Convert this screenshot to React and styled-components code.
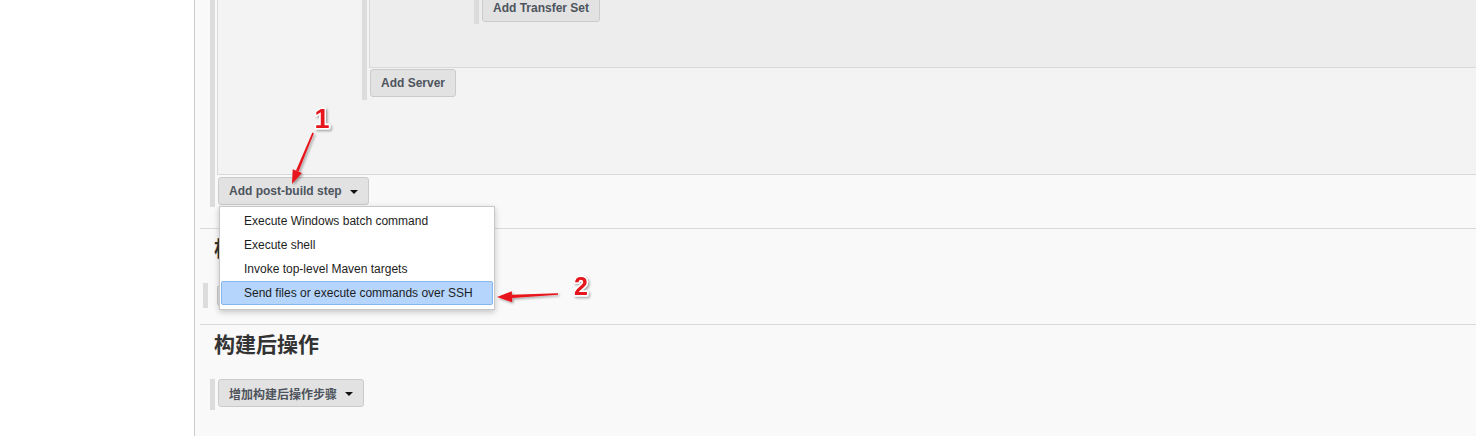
import React from 'react';
import styled, { createGlobalStyle } from 'styled-components';

const GlobalStyle = createGlobalStyle`
  html, body { margin: 0; padding: 0; background: #fff; }
  body {
    font-family: "Liberation Sans", Arial, "Noto Sans CJK SC", sans-serif;
    font-size: 12px;
  }
`;

const Page = styled.div`
  position: relative;
  display: flex;
  height: 436px;
  overflow: hidden;
`;

const Sidebar = styled.aside`
  flex: none;
  width: 194px;
  background: #fff;
`;

const Main = styled.main`
  flex: 1;
  background: #f9f9f9;
  border-left: 1px solid #cccccc;
  padding-left: 5px;
  overflow: hidden;
`;

const Section = styled.section`
  border-top: ${p => (p.$first ? 'none' : '1px solid #dadada')};
  margin-top: ${p => p.$offset || 0}px;
  padding: 0 0 ${p => p.$bottom || 0}px 10px;
`;

const Heading = styled.h2`
  margin: 0;
  padding: 7px 0 0 4px;
  font-family: "Liberation Sans", "Noto Sans CJK SC", sans-serif;
  font-size: 21px;
  line-height: 25px;
  height: 25px;
  font-weight: bold;
  color: #333;
`;

// a repeated chunk with the gray grip bar down its left edge
const Chunk = styled.div`
  border-left: 5px solid #dcdcdc;
  padding-left: ${p => p.$gap ?? 2}px;
  padding-bottom: ${p => p.$bottom || 0}px;
  margin-top: ${p => p.$top || 0}px;
  margin-left: ${p => p.$shift || 0}px;
`;

const Panel = styled.div`
  background: ${p => p.$bg};
  border-left: 1px solid #d9d9d9;
  border-bottom: 1px solid #d9d9d9;
  padding: ${p => p.$pad};
`;

const ButtonWrap = styled.div`
  position: relative;
  display: inline-block;
  vertical-align: top;
  margin-top: ${p => p.$top || 0}px;
  margin-left: ${p => p.$left || 0}px;
`;

const Button = styled.button`
  box-sizing: border-box;
  display: inline-flex;
  align-items: center;
  gap: 8px;
  height: ${p => p.$h || 28}px;
  padding: 0 10px;
  background: #e2e2e2;
  border: 1px solid #cbcbcb;
  border-radius: 3px;
  color: #4d545d;
  font-family: "Liberation Sans", Arial, "Noto Sans CJK SC", sans-serif;
  font-size: 12px;
  font-weight: bold;
  white-space: nowrap;
  cursor: pointer;
`;

const Caret = styled.span`
  width: 0;
  height: 0;
  border-left: 4px solid transparent;
  border-right: 4px solid transparent;
  border-top: 4px solid #111;
  margin-top: 1px;
`;

const Menu = styled.ul`
  position: absolute;
  top: 29px;
  left: 1px;
  z-index: 5;
  box-sizing: border-box;
  width: 276px;
  margin: 0;
  padding: 2px 1px 4px;
  list-style: none;
  background: #fff;
  border: 1px solid #c8c8c8;
  box-shadow: 0 2px 6px rgba(0, 0, 0, 0.22);
`;

const MenuItem = styled.li`
  height: 24px;
  line-height: 22px;
  padding-left: 22px;
  border: 1px solid ${p => (p.$active ? '#86b5f0' : 'transparent')};
  border-radius: 2px;
  background: ${p => (p.$active ? '#b5d5fd' : 'transparent')};
  color: #1d1d1d;
  font-size: 12px;
  white-space: nowrap;
  box-sizing: border-box;
`;

const Overlay = styled.svg`
  position: absolute;
  left: 0;
  top: 0;
  pointer-events: none;
  z-index: 10;
  overflow: visible;
`;

const Label = styled.text`
  font-family: "Liberation Sans", Arial, sans-serif;
  font-weight: bold;
  fill: #e5131a;
  stroke: #fff;
  stroke-width: 3px;
  paint-order: stroke;
  stroke-linejoin: round;
`;

const menuItems = [
  'Execute Windows batch command',
  'Execute shell',
  'Invoke top-level Maven targets',
  'Send files or execute commands over SSH',
];

function Annotations() {
  return (
    <Overlay width="1476" height="436" viewBox="0 0 1476 436">
      <defs>
        <filter id="sh" x="-20%" y="-20%" width="140%" height="140%">
          <feDropShadow dx="1.5" dy="1.5" stdDeviation="1.2" floodColor="#000" floodOpacity="0.35" />
        </filter>
      </defs>
      <g filter="url(#sh)" fill="#e8141b">
        <polygon points="312.4,132.6 313.9,133.2 298.6,171.6 296.0,170.6" />
        <polygon points="292,184 301.9,173 292.7,169.2" />
        <polygon points="558,293.3 558,294.7 512,297.9 512,294.7" />
        <polygon points="497,297 512.2,302.3 511.8,291.3" />
      </g>
      <g filter="url(#sh)">
        <Label x="322" y="128" fontSize="27" textAnchor="middle">1</Label>
        <Label x="581" y="295" fontSize="25" textAnchor="middle">2</Label>
      </g>
    </Overlay>
  );
}

export default function App() {
  return (
    <>
      <GlobalStyle />
      <Page>
        <Sidebar />
        <Main>
          <Section $first $offset={-40} $bottom={21}>
            <Chunk $bottom={2}>
              <Panel $bg="#f3f3f3" $pad="0 0 74px 144px">
                <Chunk $bottom={3}>
                  <Panel $bg="#ededed" $pad="34px 0 43px 104px">
                    <Chunk $gap={3} $bottom={2}>
                      <Button>Add Transfer Set</Button>
                    </Chunk>
                  </Panel>
                  <ButtonWrap $top={1} $left={1}>
                    <Button>Add Server</Button>
                  </ButtonWrap>
                </Chunk>
              </Panel>
              <ButtonWrap $top={2} $left={1}>
                <Button>
                  Add post-build step <Caret />
                </Button>
                <Menu>
                  {menuItems.map((item, i) => (
                    <MenuItem key={item} $active={i === menuItems.length - 1}>
                      {item}
                    </MenuItem>
                  ))}
                </Menu>
              </ButtonWrap>
            </Chunk>
          </Section>

          <Section $bottom={16}>
            <Heading>构建设置</Heading>
            <Chunk $top={22} $shift={-7} $gap={9} $bottom={2}>
              <ButtonWrap $top={2}>
                <Button $h={21}>增加构建步骤</Button>
              </ButtonWrap>
            </Chunk>
          </Section>

          <Section>
            <Heading>构建后操作</Heading>
            <Chunk $top={22} $bottom={3}>
              <ButtonWrap $left={1}>
                <Button>
                  增加构建后操作步骤 <Caret />
                </Button>
              </ButtonWrap>
            </Chunk>
          </Section>
        </Main>
        <Annotations />
      </Page>
    </>
  );
}
